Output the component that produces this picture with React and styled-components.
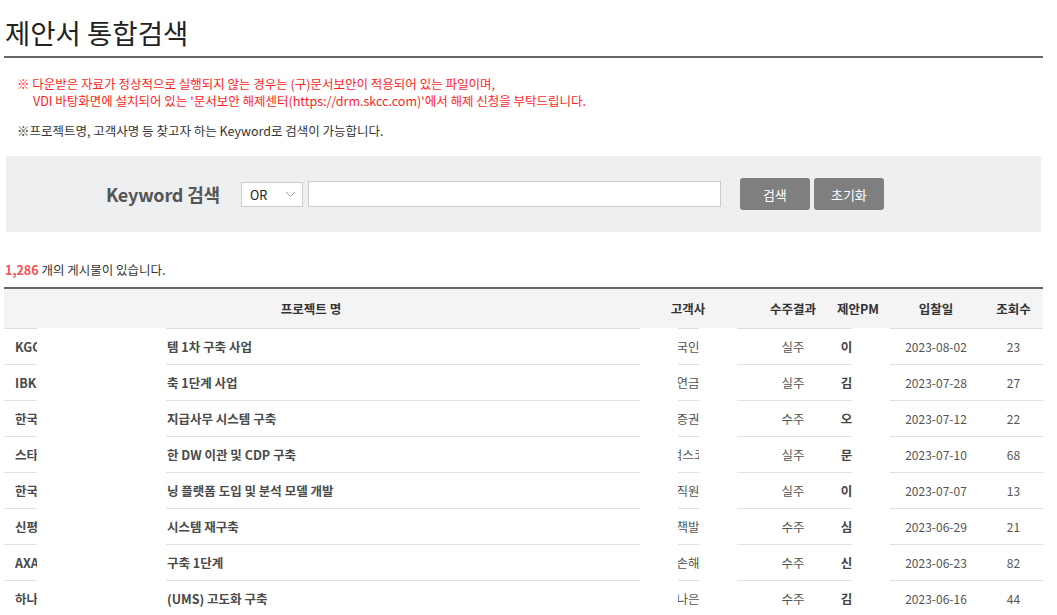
import React from 'react';
import styled, { createGlobalStyle } from 'styled-components';

const GlobalStyle = createGlobalStyle`
  html, body {
    margin: 0;
    padding: 0;
    background: #fff;
  }
  body {
    font-family: "Noto Sans CJK KR", "Noto Sans", sans-serif;
    color: #333;
  }
`;

const Page = styled.div`
  width: 1039px;
  padding: 0 4px;
`;

const Title = styled.h1`
  margin: 0;
  padding: 12px 0 4px 1px;
  font-size: 27.5px;
  font-weight: 400;
  line-height: 40px;
  color: #222;
  border-bottom: 2px solid #666;
`;

const Notice = styled.div`
  margin-top: ${(p) => (p.$warn ? '17px' : '13px')};
  padding-left: 13px;
  font-size: 12.5px;
  line-height: 17px;
  color: ${(p) => (p.$warn ? '#ff1f1f' : '#333')};
`;

const Indent = styled.div`
  padding-left: 16px;
`;

const SearchBox = styled.div`
  margin: 17px 2px 0;
  height: 76px;
  background: #eeeff1;
  display: flex;
  align-items: center;
  padding-left: 100px;
`;

const Label = styled.span`
  font-size: 18px;
  font-weight: 700;
  color: #555;
  margin-right: 21px;
  letter-spacing: -0.2px;
`;

const Select = styled.div`
  width: 62px;
  height: 25px;
  background: #fff;
  border: 1px solid #ccc;
  display: flex;
  align-items: center;
  justify-content: space-between;
  padding: 0 6px 0 8px;
  box-sizing: border-box;
  font-size: 12.5px;
  color: #222;
  margin-right: 5px;
`;

const Input = styled.input`
  width: 413px;
  height: 26px;
  box-sizing: border-box;
  border: 1px solid #ccc;
  background: #fff;
  outline: none;
  margin-right: 19px;
`;

const Button = styled.button`
  width: 70px;
  height: 32px;
  border: 0;
  border-radius: 3px;
  background: #7f7f7f;
  color: #fff;
  font-family: inherit;
  font-size: 13px;
  margin-right: 4px;
  cursor: pointer;
`;

const Count = styled.div`
  margin-top: 29px;
  padding-left: 1px;
  font-size: 12.5px;
  line-height: 17px;
  color: #333;
`;

const Num = styled.span`
  color: #f25454;
  font-weight: 700;
`;

const TableWrap = styled.div`
  position: relative;
  margin-top: 9px;
  border-top: 2px solid #666;
`;

const Grid = styled.div`
  display: grid;
  grid-template-columns: 614px 140px 70px 60px 96px 59px;
  align-items: center;
  height: ${(p) => (p.$head ? '39px' : '35px')};
  background: ${(p) => (p.$head ? '#f4f4f4' : '#fff')};
  border-bottom: 1px solid ${(p) => (p.$head ? '#ddd' : '#e2e2e2')};
  font-size: 12.5px;
`;

const Th = styled.div`
  text-align: center;
  font-weight: 700;
  color: #333;
`;

const Cell = styled.div`
  text-align: center;
  font-size: ${(p) => (p.$num ? '12px' : 'inherit')};
  font-weight: ${(p) => (p.$bold ? 700 : 400)};
  color: ${(p) => (p.$bold ? '#444' : '#555')};
  white-space: nowrap;
  overflow: hidden;
`;

const ProjectCell = styled.div`
  display: flex;
  padding-left: 11px;
  font-weight: 700;
  color: #4a4a4a;
  white-space: nowrap;
`;

const Client = styled.span`
  width: 152px;
  overflow: hidden;
  flex-shrink: 0;
`;

const Body = styled.div`
  position: relative;
`;

/* 화면 캡처 시 가려진 영역 */
const Mask = styled.div`
  position: absolute;
  top: -1px;
  bottom: 0;
  left: ${(p) => p.$left}px;
  width: ${(p) => p.$w}px;
  background: #fff;
`;

const rows = [
  ['KGC', '템 1차 구축 사업', '국인', '실주', '이정민', '2023-08-02', 23],
  ['IBK', '축 1단계 사업', '연금', '실주', '김도현', '2023-07-28', 27],
  ['한국', '지급사무 시스템 구축', '증권', '수주', '오세훈', '2023-07-12', 22],
  ['스타', '한 DW 이관 및 CDP 구축', '벅스코', '실주', '문지호', '2023-07-10', 68],
  ['한국', '닝 플랫폼 도입 및 분석 모델 개발', '직원', '실주', '이수진', '2023-07-07', 13],
  ['신평', '시스템 재구축', '책발', '수주', '심재원', '2023-06-29', 21],
  ['AXA', '구축 1단계', '손해', '수주', '신동욱', '2023-06-23', 82],
  ['하나', '(UMS) 고도화 구축', '나은', '수주', '김태영', '2023-06-16', 44],
  ['SK', '운영 고도화', '에너', '실주', '박준호', '2023-06-12', 31],
];

const Chevron = () => (
  <svg width="11" height="7" viewBox="0 0 11 7" fill="none">
    <path d="M1 1l4.5 4.5L10 1" stroke="#999" strokeWidth="1" />
  </svg>
);

const App = () => (
  <Page>
    <GlobalStyle />
    <Title>제안서 통합검색</Title>

    <Notice $warn>
      ※ 다운받은 자료가 정상적으로 실행되지 않는 경우는 (구)문서보안이 적용되어 있는 파일이며,
      <Indent>VDI 바탕화면에 설치되어 있는 '문서보안 해제센터(https://drm.skcc.com)'에서 해제 신청을 부탁드립니다.</Indent>
    </Notice>
    <Notice>※프로젝트명, 고객사명 등 찾고자 하는 Keyword로 검색이 가능합니다.</Notice>

    <SearchBox>
      <Label>Keyword 검색</Label>
      <Select>
        OR
        <Chevron />
      </Select>
      <Input type="text" />
      <Button>검색</Button>
      <Button>초기화</Button>
    </SearchBox>

    <Count>
      <Num>1,286</Num> 개의 게시물이 있습니다.
    </Count>

    <TableWrap>
      <Grid $head>
        <Th>프로젝트 명</Th>
        <Th>고객사</Th>
        <Th>수주결과</Th>
        <Th>제안PM</Th>
        <Th>입찰일</Th>
        <Th>조회수</Th>
      </Grid>
      <Body>
        {rows.map(([client, title, cust, result, pm, date, views], i) => (
          <Grid key={i}>
            <ProjectCell>
              <Client>{client}</Client>
              <span>{title}</span>
            </ProjectCell>
            <Cell>{cust}</Cell>
            <Cell>{result}</Cell>
            <Cell $bold>{pm}</Cell>
            <Cell $num>{date}</Cell>
            <Cell $num>{views}</Cell>
          </Grid>
        ))}
        <Mask $left={33} $w={129} />
        <Mask $left={636} $w={38} />
        <Mask $left={695} $w={38} />
        <Mask $left={848} $w={38} />
      </Body>
    </TableWrap>
  </Page>
);

export default App;
